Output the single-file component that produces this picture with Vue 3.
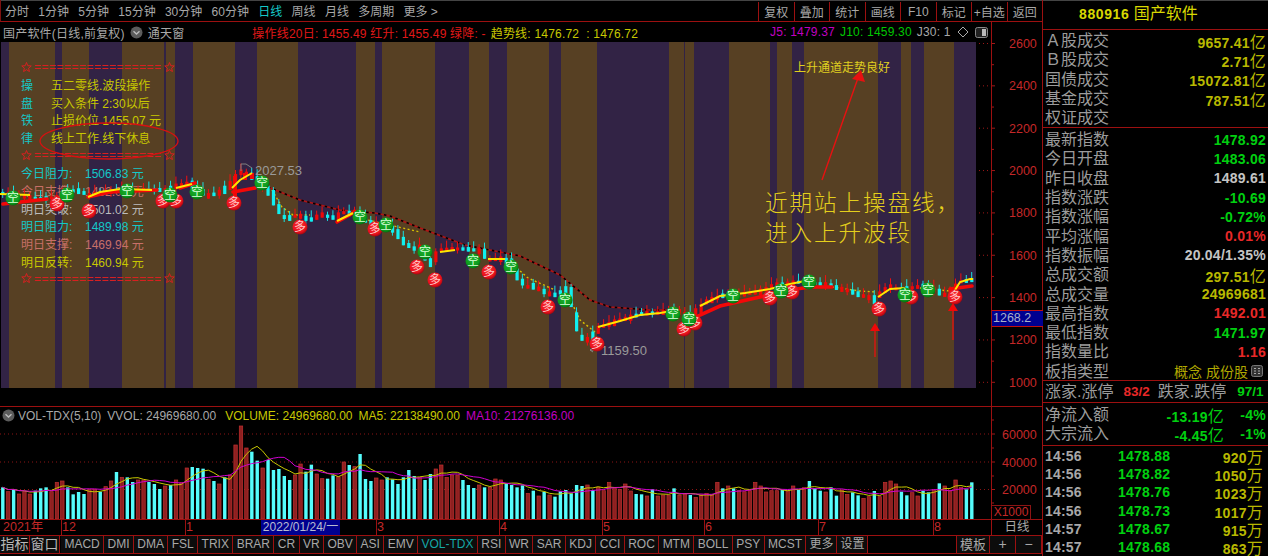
<script setup>
const leftTabs = [
  { t: '分时' }, { t: '1分钟' }, { t: '5分钟' }, { t: '15分钟' }, { t: '30分钟' }, { t: '60分钟' },
  { t: '日线', on: true }, { t: '周线' }, { t: '月线' }, { t: '多周期' }, { t: '更多 >' }
]
const rightTabs = ['复权', '叠加', '统计', '画线', 'F10', '标记', '+自选', '返回']

const bandEdges = [1, 9, 55, 62, 89, 122, 164, 166, 175, 193, 235, 257, 298, 356, 375, 382, 435, 469, 489, 507, 549, 561, 597, 669, 684, 685, 694, 729, 770, 777, 792, 804, 878, 901, 911, 924, 954, 976]
const bands = bandEdges.slice(0, -1).map((x, i) => ({
  x, w: bandEdges[i + 1] - x,
  c: i % 2 === 0 ? '#322345' : '#574023'
}))
const setBand = (x, c) => { bands.find(b => b.x === x).c = c }
setBand(122, '#574023')
setBand(164, '#322345')
setBand(166, '#574023')
setBand(175, '#322345')

const tops = [
  -262, 275, -268, 282, 275, 282, -272, -265, -262, 275, 247, 243, -262, -283, -276, -282, 268, 268, -275, 260, 243, -216, 232, -232, -246, 240, 240, -246, -252, -267, 258, -255, 240, 248, 204, -201, -204, -206, 238, -243, 252, -232, 225, 135, 78, 144, -155, -182, 204, -180, -210, -207, -228, -240, 225, 192, -215, -194, 222, 236, -236, -226, 230, 186, -195, 200, -162, -237, -243, 234, 240, -232, -238, -252, -232, -210, -228, 232, -240, -222, 207, 195, 232, 225, 225, -240, -255, -264, 255, -262, 262, 237, 240, -252, -255, -262,
  -256, 280, -272, 288, -275, 285, -290, -274, -270, -280, -255, -258, 255, -270, 262, 272, 247, 262, 268, 252, 273, -282, -283, 288, -268, 288, 285, 285, -265, 285, 282, -285, 292, 285, 280, 285, 247, -265, 258, -265, 272, 275, 272, 247, 258, 276, 272, 272, -270, 272, 258, -270, 263, -243, -265, -272, 276, -262, -287, 270, 283, -277, -286, 295, 290, -273, 290, 247, 243, 252, -275, -286, 278, 288, -272, -277, 270, -250, 258, 272, 240, 262, -268, -247
]
const step = (971.7 - 2.7) / (tops.length - 1)
const barX = i => 2.7 + step * i
const baseY = 519
const vols = tops.map((t, i) => ({
  x: barX(i),
  up: t > 0,
  h: (357 - Math.abs(t)) / 3
}))
const avgLine = n => vols.map((_, i) => {
  const s = vols.slice(Math.max(0, i - n + 1), i + 1)
  const m = s.reduce((a, b) => a + b.h, 0) / s.length
  return `${barX(i).toFixed(1)},${(baseY - m).toFixed(1)}`
}).join(' ')
const ma5 = avgLine(5)
const ma10 = avgLine(10)

const track = [[0, 193], [20, 196], [40, 199], [60, 197], [75, 190], [90, 195], [120, 190], [150, 190], [165, 190], [180, 185], [190, 183], [208, 196], [222, 192], [232, 184], [240, 172], [250, 175], [262, 184], [270, 193], [275, 200], [280, 212], [285, 218], [292, 218], [297, 215], [305, 218], [310, 220], [322, 215], [335, 218], [345, 212], [358, 213], [368, 222], [380, 225], [395, 230], [402, 240], [408, 245], [412, 248], [420, 250], [430, 263], [435, 258], [440, 250], [450, 249], [465, 249], [475, 250], [483, 252], [490, 260], [500, 259], [510, 262], [520, 280], [528, 287], [535, 286], [540, 290], [548, 293], [553, 296], [558, 293], [565, 291], [570, 292], [577, 324], [582, 338], [588, 340], [593, 336], [598, 330], [605, 325], [612, 324], [620, 320], [630, 318], [640, 314], [650, 313], [660, 313], [670, 311], [680, 312], [690, 316], [695, 312], [700, 310], [708, 300], [715, 300], [720, 295], [730, 298], [745, 294], [760, 292], [775, 285], [790, 283], [800, 282], [810, 283], [830, 285], [840, 289], [850, 291], [860, 295], [870, 298], [875, 300], [882, 292], [890, 287], [900, 290], [910, 288], [925, 286], [935, 290], [945, 295], [955, 290], [960, 282], [972, 280]]
const trackY = x => {
  for (let i = 1; i < track.length; i++) {
    if (x <= track[i][0]) {
      const [x0, y0] = track[i - 1]
      const [x1, y1] = track[i]
      return y0 + (y1 - y0) * (x - x0) / (x1 - x0)
    }
  }
  return 280
}
const candles = vols.map((v, i) => {
  const y = trackY(v.x)
  const slope = Math.abs(trackY(v.x + step) - y)
  const h = Math.min(20, Math.max(3, slope + 2 + (i % 3)))
  const w = 3 + (i * 7) % 5
  return { x: v.x - 1.5, y: y - h / 2, h, up: v.up, wy: y - h / 2 - w, wh: h + w + (i % 4 === 0 ? 3 : 0), cx: v.x }
})

const pts = a => a.map(p => p.join(',')).join(' ')
const dashLine = pts([[268, 187], [300, 200], [340, 210], [375, 213], [390, 216], [420, 228], [465, 245], [520, 256], [560, 275], [590, 300], [610, 307], [650, 310], [675, 310]])
const dashLow = [
  [[272, 190], [282, 207], [293, 215], [310, 215]],
  [[355, 217], [385, 224], [420, 232]],
  [[510, 262], [528, 278], [555, 290]],
  [[568, 295], [580, 320], [595, 332]],
  [[832, 287], [860, 291], [876, 292]],
  [[920, 288], [950, 291]]
].map(pts)
const redLines = [
  [[3, 204], [47, 199]],
  [[88, 197], [110, 192], [157, 190]],
  [[180, 188], [195, 183]],
  [[233, 192], [255, 188]],
  [[337, 222], [355, 212]],
  [[685, 323], [700, 315], [720, 306], [760, 297], [790, 290], [810, 287], [832, 287]],
  [[950, 289], [972, 286]]
].map(pts)
const yellowLines = [
  [[0, 194], [30, 195]],
  [[88, 197], [100, 192], [120, 189], [152, 190]],
  [[176, 188], [192, 184]],
  [[232, 188], [240, 180], [252, 173]],
  [[337, 221], [353, 213]],
  [[440, 252], [455, 250]],
  [[488, 259], [505, 259]],
  [[598, 327], [620, 321], [640, 315], [660, 313], [672, 311]],
  [[700, 306], [720, 296], [745, 293], [770, 289], [790, 284], [805, 281]],
  [[878, 297], [890, 289], [905, 288]],
  [[955, 290], [960, 282], [970, 279], [973, 279]]
].map(pts)
const duo = [[57, 204], [89, 211], [163, 201], [176, 201], [234, 203], [300, 227], [375, 229], [417, 267], [435, 280], [489, 272], [548, 307], [597, 344], [684, 329], [695, 323], [770, 298], [792, 292], [879, 309], [911, 297], [955, 297]]
const kong = [[13, 198], [67, 195], [127, 191], [170, 195], [197, 192], [262, 183], [360, 217], [386, 225], [425, 252], [473, 261], [511, 267], [565, 300], [673, 314], [689, 319], [733, 296], [781, 291], [809, 282], [905, 295], [928, 290]]

const priceLevels = [2600, 2400, 2200, 2000, 1800, 1600, 1400, 1200, 1000].map((v, i) => ({ v, y: 43.5 + i * 42.35 }))
const priceMinor = priceLevels.slice(0, -1).map(l => l.y + 21.2)
const volLevels = [{ v: 60000, y: 434 }, { v: 40000, y: 462 }, { v: 20000, y: 489.5 }]
const volMinor = [448, 476, 503, 420]

const starPts = (() => {
  const out = []
  for (let i = 0; i < 10; i++) {
    const r = i % 2 ? 2.2 : 5
    const a = -Math.PI / 2 + i * Math.PI / 5
    out.push(`${(5.5 + r * Math.cos(a)).toFixed(2)},${(5.5 + r * Math.sin(a)).toFixed(2)}`)
  }
  return out.join(' ')
})()
const rule = '='.repeat(17)
const ruleRows = [
  { l: '操', t: '五二零线.波段操作' },
  { l: '盘', t: '买入条件 2:30以后' },
  { l: '铁', t: '止损价位 1455.07 元' },
  { l: '律', t: '线上工作.线下休息' }
]
const priceRows = [
  { l: '今日阻力:', v: '1506.83 元', c: 'cy' },
  { l: '今日支撑:', v: '1482.02 元', c: 'pk' },
  { l: '明日突破:', v: '1501.02 元', c: 'wh' },
  { l: '明日阻力:', v: '1489.98 元', c: 'cy' },
  { l: '明日支撑:', v: '1469.94 元', c: 'pk' },
  { l: '明日反转:', v: '1460.94 元', c: 'yl' }
]

const dateLabels = [{ x: 3, t: '2021年' }, { x: 62, t: '12' }, { x: 186, t: '1' }, { x: 377, t: '3' }, { x: 500, t: '4' }, { x: 603, t: '5' }, { x: 705, t: '6' }, { x: 819, t: '7' }, { x: 934, t: '8' }]
const dateTicks = [61, 185, 376, 499, 602, 704, 818, 933]

const tabs = ['MACD', 'DMI', 'DMA', 'FSL', 'TRIX', 'BRAR', 'CR', 'VR', 'OBV', 'ASI', 'EMV', 'VOL-TDX', 'RSI', 'WR', 'SAR', 'KDJ', 'CCI', 'ROC', 'MTM', 'BOLL', 'PSY', 'MCST', '更多', '设置']

const secA = [
  { l: 'Ａ股成交', v: '9657.41', u: '亿' },
  { l: 'Ｂ股成交', v: '2.71', u: '亿' },
  { l: '国债成交', v: '15072.81', u: '亿' },
  { l: '基金成交', v: '787.51', u: '亿' },
  { l: '权证成交', v: '', u: '' }
]
const secB = [
  { l: '最新指数', v: '1478.92', c: 'g' },
  { l: '今日开盘', v: '1483.06', c: 'g' },
  { l: '昨日收盘', v: '1489.61', c: 'w' },
  { l: '指数涨跌', v: '-10.69', c: 'g' },
  { l: '指数涨幅', v: '-0.72%', c: 'g' },
  { l: '平均涨幅', v: '0.01%', c: 'r' },
  { l: '指数振幅', v: '20.04/1.35%', c: 'w' },
  { l: '总成交额', v: '297.51', u: '亿', c: 'o' },
  { l: '总成交量', v: '24969681', c: 'o' },
  { l: '最高指数', v: '1492.01', c: 'r' },
  { l: '最低指数', v: '1471.97', c: 'g' },
  { l: '指数量比', v: '1.16', c: 'r' }
]
const flows = [
  { l: '净流入额', v: '-13.19', p: '-4%' },
  { l: '大宗流入', v: '-4.45', p: '-1%' }
]
const ticks = [
  { t: '14:56', p: '1478.88', v: '920' },
  { t: '14:56', p: '1478.82', v: '1050' },
  { t: '14:56', p: '1478.76', v: '1023' },
  { t: '14:56', p: '1478.73', v: '1017' },
  { t: '14:57', p: '1478.67', v: '915' },
  { t: '14:57', p: '1478.68', v: '863' }
]
</script>

<template>
  <div class="root">
    <div class="left">
      <div class="toolbar">
        <div class="periods">
          <span v-for="t in leftTabs" :key="t.t" :class="{ on: t.on }">{{ t.t }}</span>
        </div>
        <div class="tools">
          <span v-for="t in rightTabs" :key="t">{{ t }}</span>
        </div>
      </div>

      <div class="mainrow">
        <div class="mainleft">
          <div class="titlebar">
            <span class="name">国产软件(日线,前复权)</span>
            <svg class="drop" width="13" height="13" viewBox="0 0 13 13"><circle cx="6.5" cy="6.5" r="6" fill="#5c5c5c" /><path d="M3.5 5.2 6.5 8 9.5 5.2" fill="none" stroke="#bbb" stroke-width="1.4" /></svg>
            <span class="name">通天窗</span>
            <span class="red first">操作线20日: 1455.49 红升: 1455.49 绿降: -</span>
            <span class="yel trend">趋势线: 1476.72 &nbsp;: 1476.72</span>
            <span class="mag jv">J5: 1479.37</span>
            <span class="grn">J10: 1459.30</span>
            <span class="gry j30">J30: 1</span>
            <svg class="dia" width="12" height="12" viewBox="0 0 12 12"><path d="M6 1 11 6 6 11 1 6Z" fill="none" stroke="#aaa" /></svg>
            <svg class="win" width="13" height="11" viewBox="0 0 13 11"><rect x="0.5" y="0.5" width="12" height="10" rx="2" fill="#222" stroke="#888" /><rect x="7" y="2" width="4" height="7" fill="#bbb" /></svg>
          </div>
          <div class="plot">
            <svg class="layer" viewBox="0 42 991 364" width="991" height="364">
              <rect v-for="b in bands" :key="b.x" :x="b.x" y="42" :width="b.w" height="346" :fill="b.c" />
            </svg>
            <div class="legend">
              <div class="lg-row">
                <svg class="star" width="11" height="11" viewBox="0 0 11 11"><polygon :points="starPts" fill="none" stroke="#d82020" /></svg>
                <span class="rule">{{ rule }}</span>
                <svg class="star" width="11" height="11" viewBox="0 0 11 11"><polygon :points="starPts" fill="none" stroke="#d82020" /></svg>
              </div>
              <div v-for="r in ruleRows" :key="r.l" class="lg-row">
                <span class="lg-l cy">{{ r.l }}</span><span class="yl">{{ r.t }}</span>
              </div>
              <div class="lg-row">
                <svg class="star" width="11" height="11" viewBox="0 0 11 11"><polygon :points="starPts" fill="none" stroke="#d82020" /></svg>
                <span class="rule">{{ rule }}</span>
                <svg class="star" width="11" height="11" viewBox="0 0 11 11"><polygon :points="starPts" fill="none" stroke="#d82020" /></svg>
              </div>
              <div v-for="r in priceRows" :key="r.l" class="lg-row" :class="r.c">
                <span class="lg-p">{{ r.l }}</span><span>{{ r.v }}</span>
              </div>
              <div class="lg-row">
                <svg class="star" width="11" height="11" viewBox="0 0 11 11"><polygon :points="starPts" fill="none" stroke="#d82020" /></svg>
                <span class="rule">{{ rule }}</span>
                <svg class="star" width="11" height="11" viewBox="0 0 11 11"><polygon :points="starPts" fill="none" stroke="#d82020" /></svg>
              </div>
            </div>
            <svg class="layer" viewBox="0 42 991 364" width="991" height="364">
              <defs>
                <radialGradient id="rb" cx="45%" cy="40%" r="60%"><stop offset="0" stop-color="#ff3a3a" /><stop offset="0.75" stop-color="#e8101c" /><stop offset="1" stop-color="#a00810" /></radialGradient>
                <radialGradient id="gb" cx="45%" cy="40%" r="60%"><stop offset="0" stop-color="#20b030" /><stop offset="0.75" stop-color="#0c9a1c" /><stop offset="1" stop-color="#066a10" /></radialGradient>
              </defs>
              <line v-for="l in priceLevels" :key="l.v" x1="979" x2="991" :y1="l.y" :y2="l.y" stroke="#a01818" stroke-dasharray="1 3" />
              <polyline :points="dashLine" fill="none" stroke="#b01414" stroke-width="1.6" />
              <polyline :points="dashLine" fill="none" stroke="#000" stroke-width="1.6" stroke-dasharray="2.5 3.5" />
              <polyline v-for="(d, i) in dashLow" :key="'dl' + i" :points="d" fill="none" stroke="#d8c000" stroke-width="1.4" stroke-dasharray="2 2.5" />
              <g v-for="(c, i) in candles" :key="'c' + i">
                <line :x1="c.cx" :x2="c.cx" :y1="c.wy" :y2="c.wy + c.wh" :stroke="c.up ? '#f01010' : '#18e0e0'" />
                <rect :x="c.x" :y="c.y" width="3.2" :height="c.h" :fill="c.up ? '#f00808' : '#10f0f0'" />
              </g>
              <rect x="233" y="176" width="4" height="22" fill="#f00808" />
              <rect x="243" y="173" width="4" height="7" fill="#f00808" />
              <rect x="250" y="173" width="4" height="6" fill="#f00808" />
              <polyline v-for="(d, i) in redLines" :key="'r' + i" :points="d" fill="none" stroke="#f40808" stroke-width="3.6" stroke-linecap="round" />
              <polyline v-for="(d, i) in yellowLines" :key="'y' + i" :points="d" fill="none" stroke="#ffe600" stroke-width="2" />

              <ellipse cx="109" cy="141" rx="69" ry="18" fill="none" stroke="#d81010" stroke-width="1.3" />

              <path d="M241 171V164H246L252 168" fill="none" stroke="#808080" />
              <text x="255" y="175" class="lbl">2027.53</text>
              <path d="M590 350h8M590 350l3-2M590 350l3 2" fill="none" stroke="#888" />
              <text x="601" y="355" class="lbl">1159.50</text>

              <g v-for="(b, i) in duo" :key="'d' + i">
                <circle :cx="b[0]" :cy="b[1]" r="7.5" fill="url(#rb)" />
                <text :x="b[0]" :y="b[1] + 4.2" class="ball duo">多</text>
              </g>
              <g v-for="(b, i) in kong" :key="'k' + i">
                <circle :cx="b[0]" :cy="b[1]" r="7.5" fill="url(#gb)" />
                <text :x="b[0]" :y="b[1] + 4.2" class="ball kong">空</text>
              </g>

              <text x="794" y="72" class="note">上升通道走势良好</text>
              <line x1="822" y1="180" x2="858" y2="78" stroke="#e81010" stroke-width="1.4" />
              <polygon points="861,70 852,79 865,82" fill="#e81010" />
              <text x="765" y="211" class="big">近期站上操盘线，</text>
              <text x="765" y="241" class="big">进入上升波段</text>
              <line x1="875" y1="357" x2="875" y2="330" stroke="#e81010" stroke-width="1.3" />
              <polygon points="875,323 870,331 880,331" fill="#f00808" />
              <line x1="953" y1="340" x2="953" y2="310" stroke="#e81010" stroke-width="1.3" />
              <polygon points="953,303 948,311 958,311" fill="#f00808" />
            </svg>
          </div>
        </div>
        <div class="axis">
          <svg viewBox="992 22 50 384" width="50" height="384">
            <line v-for="l in priceLevels" :key="l.v" x1="992" x2="995" :y1="l.y" :y2="l.y" stroke="#a01818" />
            <line v-for="m in priceMinor" :key="m" x1="992" x2="994" :y1="m" :y2="m" stroke="#a01818" />
            <text v-for="l in priceLevels" :key="'t' + l.v" x="1009" :y="l.y + 4.5" class="ax">{{ l.v }}</text>
          </svg>
          <div class="tag">1268.2</div>
        </div>
      </div>

      <div class="volrow">
        <div class="volleft">
          <div class="voltitle">
            <svg class="vdrop" width="13" height="13" viewBox="0 0 13 13"><circle cx="6.5" cy="6.5" r="6" fill="#5c5c5c" /><path d="M3.5 5.2 6.5 8 9.5 5.2" fill="none" stroke="#bbb" stroke-width="1.4" /></svg>
            <span class="gry">VOL-TDX(5,10)</span>
            <span class="gry">VVOL: 24969680.00</span>
            <span class="yel v1">VOLUME: 24969680.00</span>
            <span class="yel">MA5: 22138490.00</span>
            <span class="mag">MA10: 21276136.00</span>
          </div>
          <svg class="volchart" viewBox="0 424 991 95" width="991" height="95">
            <line v-for="l in volLevels" :key="l.v" x1="0" x2="991" :y1="l.y" :y2="l.y" stroke="#8c1414" stroke-dasharray="1 3" />
            <rect v-for="(v, i) in vols" :key="i" :x="v.x - 1.6" :y="baseY - v.h" width="3.4" :height="v.h"
              :fill="v.up ? '#8e2020' : '#55fcfc'" :stroke="v.up ? '#c03030' : 'none'" stroke-width="0.7" />
            <polyline :points="ma5" fill="none" stroke="#c8c800" />
            <polyline :points="ma10" fill="none" stroke="#d000d0" />
          </svg>
        </div>
        <div class="axis vaxis">
          <svg viewBox="992 407 50 112" width="50" height="112">
            <line v-for="l in volLevels" :key="l.v" x1="992" x2="995" :y1="l.y" :y2="l.y" stroke="#a01818" />
            <line v-for="m in volMinor" :key="m" x1="992" x2="994" :y1="m" :y2="m" stroke="#a01818" />
            <text v-for="l in volLevels" :key="'v' + l.v" x="1002" :y="l.y + 4.5" class="ax">{{ l.v }}</text>
          </svg>
          <div class="xbox">X1000</div>
        </div>
      </div>

      <div class="daterow">
        <div class="dates">
          <i v-for="d in dateTicks" :key="d" class="dtick" :style="{ left: d + 'px' }"></i>
          <span v-for="d in dateLabels" :key="d.t" class="dlabel" :style="{ left: d.x + 'px' }">{{ d.t }}</span>
          <span class="dsel">2022/01/24/一</span>
        </div>
        <div class="dunit">日线</div>
      </div>

      <div class="tabrow">
        <span class="tab big-t">指标</span>
        <span class="tab big-t">窗口</span>
        <span class="gap2"></span>
        <span v-for="t in tabs" :key="t" class="tab" :class="{ on: t === 'VOL-TDX', zh: t === '更多' || t === '设置' }">{{ t }}</span>
        <span class="spring"></span>
        <span class="tab zh tpl">模板</span>
        <span class="tab pm">+</span>
        <span class="tab pm">−</span>
      </div>
    </div>

    <div class="panel">
      <div class="phead"><b>880916</b> 国产软件</div>
      <div class="sec sec-a">
        <div v-for="r in secA" :key="r.l" class="row">
          <span class="lab">{{ r.l }}</span>
          <span class="val o">{{ r.v }}<em v-if="r.u">{{ r.u }}</em></span>
        </div>
      </div>
      <div class="sec sec-b">
        <div v-for="r in secB" :key="r.l" class="row">
          <span class="lab">{{ r.l }}</span>
          <span class="val" :class="r.c">{{ r.v }}<em v-if="r.u">{{ r.u }}</em></span>
        </div>
        <div class="row">
          <span class="lab">板指类型</span>
          <span class="kind">概念 成份股
            <svg width="12" height="12" viewBox="0 0 12 12"><rect x="0.5" y="0.5" width="11" height="11" rx="2" fill="#333" stroke="#777" /><path d="M3 3.5h2M3 6h2M3 8.5h2M7 3.5h2M7 6h2M7 8.5h2" stroke="#aaa" /></svg>
          </span>
        </div>
      </div>
      <div class="sec sec-c">
        <span class="lab">涨家.涨停</span><b class="r c1">83/2</b>
        <span class="lab c2">跌家.跌停</span><b class="g c3">97/1</b>
      </div>
      <div class="sec sec-d">
        <div v-for="f in flows" :key="f.l" class="row">
          <span class="lab">{{ f.l }}</span>
          <span class="val g fv">{{ f.v }}<em>亿</em></span>
          <span class="val g fp">{{ f.p }}</span>
        </div>
      </div>
      <div class="sec-e">
        <div v-for="(t, i) in ticks" :key="i" class="trow">
          <b class="tm">{{ t.t }}</b>
          <b class="g tp">{{ t.p }}</b>
          <b class="o tv">{{ t.v }}<em>万</em></b>
        </div>
      </div>
    </div>
  </div>
</template>

<style>
html, body { margin: 0; background: #000; overflow: hidden; }
</style>

<style scoped>
.root {
  width: 1268px; height: 556px; display: flex; background: #000; overflow: hidden;
  font-family: "Liberation Sans", "Noto Sans CJK SC", sans-serif; font-size: 12px; color: #a8a8a8;
}
.left { width: 1042px; flex: none; display: flex; flex-direction: column; }

.toolbar {
  height: 21px; flex: none; box-sizing: content-box; display: flex; justify-content: space-between;
  border-bottom: 1px solid #9c1010; border-left: 1px solid #7c1010; box-shadow: inset 0 1px 0 #444;
}
.periods { display: flex; align-items: center; gap: 9.3px; padding-left: 4px; }
.periods .on { color: #14c8c8; }
.tools { display: flex; width: 284px; }
.tools span {
  flex: 1; display: flex; align-items: center; justify-content: center;
  border-left: 1px solid #9c1010; margin-top: 2px;
}

.mainrow { flex: none; display: flex; border-bottom: 1px solid #9c1010; box-sizing: content-box; height: 384px; }
.mainleft { width: 991px; flex: none; display: flex; flex-direction: column; }
.titlebar { height: 20px; flex: none; display: flex; align-items: center; position: relative; padding-left: 3px; white-space: nowrap; letter-spacing: 0.2px; overflow: hidden; }
.titlebar svg { flex: none; }
.drop { margin: 0 5px; }
.first { margin-left: 68px; }
.trend { margin-left: 5px; }
.jv { margin-left: 132px; }
.grn { color: #00c800; margin-left: 5px; }
.gry { color: #a8a8a8; }
.j30 { margin-left: 5px; }
.dia { position: absolute; left: 957px; top: 4px; }
.win { position: absolute; left: 975px; top: 5px; }
.red { color: #e01818; }
.yel { color: #c8c800; }
.mag { color: #c000c0; }

.plot { position: relative; width: 991px; height: 364px; }
.layer { position: absolute; left: 0; top: 0; display: block; }
.legend { position: absolute; left: 21px; top: 16.2px; }
.lg-row { height: 17.67px; display: flex; align-items: center; white-space: nowrap; }
.lg-l { width: 30px; }
.lg-p { width: 64px; }
.cy { color: #14c8c8; }
.yl { color: #c8c800; }
.pk { color: #c87068; }
.wh { color: #bcbcbc; }
.star { margin-left: 0; flex: none; }
.rule { color: #d82020; width: 127px; margin-left: 2px; margin-right: 3px; letter-spacing: 0.5px; line-height: 1; overflow: hidden; }

.lbl { fill: #9a9a9a; font-size: 13px; }
.ball { font-size: 12px; text-anchor: middle; }
.duo { fill: #ffc8c8; }
.kong { fill: #d8ffd8; }
.note { fill: #e0d020; font-size: 12px; }
.big { fill: #e4cf1c; font-size: 22.6px; font-weight: 300; letter-spacing: 1.9px; }

.axis { width: 50px; flex: none; position: relative; border-left: 1px solid #9c1010; }
.axis svg { display: block; }
.ax { fill: #c42828; font-size: 12.5px; }
.tag {
  position: absolute; left: 0; top: 288px; width: 50px; height: 15px; line-height: 15px;
  background: #000090; color: #a8b0c8; border-top: 1px solid #c01010; border-bottom: 1px solid #c01010;
  padding-left: 1px; box-sizing: content-box; font-size: 12.5px;
}

.volrow { height: 112px; flex: none; display: flex; border-bottom: 1px solid #9c1010; box-sizing: content-box; }
.volleft { width: 991px; flex: none; display: flex; flex-direction: column; }
.voltitle { height: 17px; flex: none; display: flex; align-items: center; gap: 6px; white-space: nowrap; padding-left: 2px; }
.voltitle svg { flex: none; }
.vdrop { margin-right: -3px; }
.v1 { margin-left: 3px; }
.volchart { display: block; }
.xbox {
  position: absolute; left: 0; top: 98px; width: 38px; height: 13px; line-height: 13px; text-align: center;
  border: 1px solid #8c1414; border-left: 0; color: #c42828; box-sizing: content-box;
}

.daterow { height: 15px; flex: none; display: flex; border-bottom: 1px solid #9c1010; box-sizing: content-box; }
.dates { width: 991px; flex: none; position: relative; color: #c42828; }
.dlabel { position: absolute; top: 0; line-height: 15px; font-size: 12.5px; }
.dtick { position: absolute; top: 0; width: 1px; height: 15px; background: #9c1010; }
.dsel {
  position: absolute; left: 261px; top: 0; width: 79px; height: 15px; line-height: 15px; text-align: center;
  background: #000090; color: #b8bcd0;
}
.dunit { flex: 1; border-left: 1px solid #9c1010; text-align: center; line-height: 15px; font-size: 12.5px; }

.tabrow { height: 17px; flex: none; display: flex; border-bottom: 1px solid #9c1010; box-sizing: content-box; }
.tab {
  padding: 0 3.4px; border-right: 1px solid #9c1010; line-height: 17px; white-space: nowrap; background: #0c0c0c;
}
.tab.on { color: #14a8a8; }
.tab.zh { padding: 0 3px; }
.big-t { font-size: 14px; padding: 0 0; width: 29px; text-align: center; flex: none; color: #b8b8b8; }
.gap2 { width: 1px; }
.spring { flex: 1; border-right: 1px solid #9c1010; }
.tpl { font-size: 13px; }
.pm { width: 25px; padding: 0; text-align: center; flex: none; font-size: 14px; }

.panel { flex: 1; border-left: 1px solid #9c1010; display: flex; flex-direction: column; min-width: 0; }
.phead {
  height: 29px; flex: none; border-bottom: 1px solid #9c1010; padding-left: 36px; color: #d8d800; font-size: 16px;
  line-height: 28px; white-space: nowrap; box-shadow: inset 0 1px 0 #444; box-sizing: content-box;
}
.phead b { letter-spacing: 0.6px; font-size: 14px; }
.sec { flex: none; border-bottom: 1px solid #9c1010; padding-left: 2px; padding-right: 2px; }
.sec-a { height: 98px; padding-top: 1px; box-sizing: border-box; }
.sec-b { height: 253px; padding-top: 2px; box-sizing: border-box; }
.row { height: 19.3px; display: flex; align-items: center; justify-content: space-between; }
.lab { font-size: 16px; color: #9c9c9c; line-height: 19px; white-space: nowrap; }
.val { font-size: 14px; font-weight: 700; letter-spacing: 0.25px; white-space: nowrap; }
.val em, .tv em { font-style: normal; font-weight: 400; font-size: 16px; }
.o { color: #b8b800; }
.g { color: #00d010; }
.r { color: #e82828; }
.w { color: #c4c4c4; }
.kind { color: #b0a800; font-size: 14px; display: flex; align-items: center; gap: 3px; white-space: nowrap; }
.kind svg { margin-right: 3px; }
.sec-c { height: 22px; box-sizing: border-box; display: flex; align-items: center; }
.sec-c b { font-size: 13.5px; }
.c1 { margin-left: 10px; }
.c2 { margin-left: 8px; }
.c3 { margin-left: 11px; }
.sec-d { height: 43px; box-sizing: border-box; padding-top: 2px; }
.fv { margin-left: auto; }
.fp { width: 42px; text-align: right; }
.sec-e { padding: 1px 2px 0; flex: 1; }
.trow { height: 18.2px; display: flex; align-items: center; font-size: 14px; white-space: nowrap; }
.tm { color: #a8a8a8; width: 73px; flex: none; letter-spacing: 0.2px; }
.tp { width: 52px; flex: none; letter-spacing: 0.25px; }
.tv { margin-left: auto; padding-right: 3px; letter-spacing: 0.25px; }
</style>
